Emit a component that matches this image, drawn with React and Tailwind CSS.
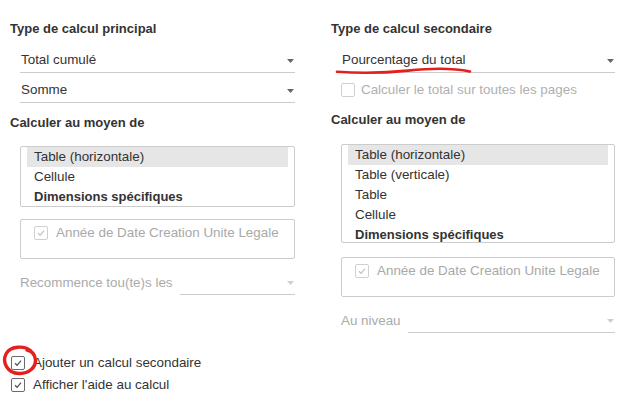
const Check = ({ disabled }) => (
  <span
    className={`flex h-[14px] w-[14px] shrink-0 items-center justify-center rounded-[2px] border ${
      disabled ? "border-[#d0d0d0]" : "border-[#6a6a6a]"
    }`}
  >
    <svg width="10" height="10" viewBox="0 0 10 10">
      <path
        d="M2 5.2 L4.1 7.3 L8 2.6"
        fill="none"
        stroke={disabled ? "#c4c4c4" : "#555"}
        strokeWidth="1.3"
      />
    </svg>
  </span>
);

const Empty = () => (
  <span className="h-[14px] w-[14px] shrink-0 rounded-[2px] border border-[#d0d0d0]"></span>
);

const Arrow = ({ light }) => (
  <svg width="7" height="4" viewBox="0 0 7 4" className="mr-[1px]">
    <path d="M0 0 H7 L3.5 4 Z" fill={light ? "#cfcfcf" : "#666"} />
  </svg>
);

const Dropdown = ({ value, className = "" }) => (
  <div
    className={`flex h-[24px] items-center justify-between border-b border-[#cccccc] pl-[1px] ${className}`}
  >
    <span>{value}</span>
    <Arrow />
  </div>
);

const ListBox = ({ items, height }) => (
  <div
    className={`overflow-hidden rounded-[2px] border border-[#cccccc] ${height}`}
  >
    {items.map((it, i) => (
      <div
        key={it}
        className={`mx-[6px] flex h-[20px] items-center pl-[7px] ${
          i === 0 ? "bg-[#e6e6e6]" : ""
        } ${i === items.length - 1 ? "text-[13px] font-bold" : ""}`}
      >
        {it}
      </div>
    ))}
  </div>
);

const FieldBox = () => (
  <div className="h-[40px] rounded-[2px] border border-[#cccccc] pl-[13px] pt-[3px]">
    <div className="flex h-[20px] items-center gap-[8px] text-[#a9a9a9]">
      <Check disabled />
      <span>Année de Date Creation Unite Legale</span>
    </div>
  </div>
);

const LabeledSelect = ({ label }) => (
  <div className="flex h-[24px] items-center gap-[7px] text-[#ababab]">
    <span>{label}</span>
    <div className="flex h-[24px] flex-1 items-center justify-end border-b border-[#cccccc]">
      <Arrow light />
    </div>
  </div>
);

export default function App() {
  return (
    <div className="relative h-[418px] w-[632px] overflow-hidden bg-white font-['Liberation_Sans',Arial,sans-serif] text-[13.4px] text-[#333333]">
      <div className="grid grid-cols-[285px_284px] gap-x-[36px] pl-[10px] pt-[21px]">
        {/* Left column */}
        <div className="flex flex-col">
          <h2 className="h-[16px] text-[13px] font-bold leading-[16px]">Type de calcul principal</h2>
          <div className="ml-[10px] mt-[12px] flex flex-col gap-[6px]">
            <Dropdown value="Total cumulé" />
            <Dropdown value="Somme" />
          </div>
          <h2 className="mt-[12px] h-[16px] text-[13px] font-bold leading-[16px]">Calculer au moyen de</h2>
          <div className="ml-[10px] mt-[15px] flex flex-col">
            <ListBox
              height="h-[61px]"
              items={["Table (horizontale)", "Cellule", "Dimensions spécifiques"]}
            />
            <div className="mt-[12px]">
              <FieldBox />
            </div>
            <div className="mt-[12px]">
              <LabeledSelect label="Recommence tou(te)s les" />
            </div>
          </div>
          <div className="ml-[1px] mt-[61px] flex flex-col gap-[8px]">
            <label className="flex h-[14px] items-center gap-[8px]">
              <Check />
              <span>Ajouter un calcul secondaire</span>
            </label>
            <label className="flex h-[14px] items-center gap-[8px]">
              <Check />
              <span>Afficher l'aide au calcul</span>
            </label>
          </div>
        </div>

        {/* Right column */}
        <div className="flex flex-col">
          <h2 className="h-[16px] text-[13px] font-bold leading-[16px]">Type de calcul secondaire</h2>
          <div className="ml-[10px] mt-[12px] flex flex-col">
            <Dropdown value="Pourcentage du total" />
            <div className="mt-[7px] flex h-[20px] items-center gap-[6px] text-[#b0b0b0]">
              <Empty />
              <span>Calculer le total sur toutes les pages</span>
            </div>
          </div>
          <h2 className="mt-[12px] h-[16px] text-[13px] font-bold leading-[16px]">Calculer au moyen de</h2>
          <div className="ml-[10px] mt-[16px] flex flex-col">
            <ListBox
              height="h-[99px]"
              items={[
                "Table (horizontale)",
                "Table (verticale)",
                "Table",
                "Cellule",
                "Dimensions spécifiques",
              ]}
            />
            <div className="mt-[14px]">
              <FieldBox />
            </div>
            <div className="mt-[12px]">
              <LabeledSelect label="Au niveau" />
            </div>
          </div>
        </div>
      </div>

      {/* red annotations */}
      <svg
        className="pointer-events-none absolute left-0 top-0"
        width="632"
        height="418"
        viewBox="0 0 632 418"
      >
        <path
          d="M337 71.8 C 358 73.2, 385 73, 408 70.6 S 452 67.8, 470 71.4"
          fill="none"
          stroke="#e3201b"
          strokeWidth="2.6"
          strokeLinecap="round"
        />
        <path
          d="M31 351 C 24 345, 10 346, 6 354 C 2 362, 7 373, 19 373.5 C 29 374, 36 367, 35.5 360 C 35 355, 32 351, 27 350"
          fill="none"
          stroke="#e3201b"
          strokeWidth="3.4"
          strokeLinecap="round"
        />
      </svg>
    </div>
  );
}
